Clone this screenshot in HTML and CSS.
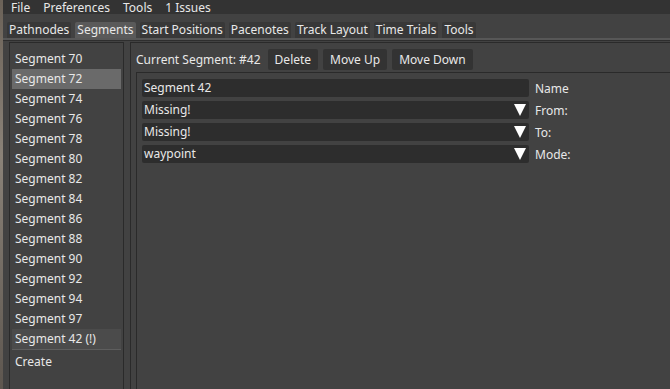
FILE: index.html
```html
<!DOCTYPE html>
<html lang="en">
<head>
    <meta charset="UTF-8">
    <title>Segments</title>
    <link rel="stylesheet" href="styles.css">
</head>
<body>
    <div class="edge"></div>
    <div class="window">
        <div class="menubar">
            <span class="menu-item">File</span>
            <span class="menu-item">Preferences</span>
            <span class="menu-item">Tools</span>
            <span class="menu-item">1 Issues</span>
        </div>

        <div class="tabbar">
            <span class="tab">Pathnodes</span>
            <span class="tab active">Segments</span>
            <span class="tab">Start Positions</span>
            <span class="tab">Pacenotes</span>
            <span class="tab">Track Layout</span>
            <span class="tab">Time Trials</span>
            <span class="tab">Tools</span>
        </div>

        <div class="content">
            <div class="segment-list">
                <div class="list-item">Segment 70</div>
                <div class="list-item selected">Segment 72</div>
                <div class="list-item">Segment 74</div>
                <div class="list-item">Segment 76</div>
                <div class="list-item">Segment 78</div>
                <div class="list-item">Segment 80</div>
                <div class="list-item">Segment 82</div>
                <div class="list-item">Segment 84</div>
                <div class="list-item">Segment 86</div>
                <div class="list-item">Segment 88</div>
                <div class="list-item">Segment 90</div>
                <div class="list-item">Segment 92</div>
                <div class="list-item">Segment 94</div>
                <div class="list-item">Segment 97</div>
                <div class="list-item current">Segment 42 (!)</div>
                <div class="list-item create">Create</div>
            </div>

            <div class="editor">
                <div class="toolbar">
                    <span class="current-label">Current Segment: #42</span>
                    <button class="btn">Delete</button>
                    <button class="btn">Move Up</button>
                    <button class="btn">Move Down</button>
                </div>

                <div class="fields">
                    <div class="field">
                        <div class="input">Segment 42</div>
                        <span class="field-label">Name</span>
                    </div>
                    <div class="field">
                        <div class="input">Missing!<span class="arrow"></span></div>
                        <span class="field-label">From:</span>
                    </div>
                    <div class="field">
                        <div class="input">Missing!<span class="arrow"></span></div>
                        <span class="field-label">To:</span>
                    </div>
                    <div class="field">
                        <div class="input">waypoint<span class="arrow"></span></div>
                        <span class="field-label">Mode:</span>
                    </div>
                </div>
            </div>
        </div>
    </div>
</body>
</html>
```

FILE: styles.css
```css
body {
    margin: 0;
    height: 389px;
    overflow: hidden;
    display: flex;
    background: #424242;
    font-family: 'Noto Sans', sans-serif;
    font-size: 12px;
    color: #e8e8e8;
}
.edge {
    width: 3px;
    background: linear-gradient(#6b6258, #8a8278 40%, #5d564f);
}
.window {
    flex: 1;
    display: flex;
    flex-direction: column;
    min-width: 0;
}
.menubar {
    height: 14px;
    background: #333333;
    display: flex;
    gap: 11px;
    padding-left: 7px;
    line-height: 15px;
}
.menu-item {
    padding: 0 1px;
}
.tabbar {
    display: flex;
    gap: 4px;
    padding: 8px 0 0 4px;
    border-bottom: 2px solid #575757;
}
.tab {
    height: 16px;
    line-height: 16px;
    padding: 0 2px;
    background: #383838;
    border-radius: 2px 2px 0 0;
}
.tab.active {
    background: #5a5a5a;
}
.content {
    flex: 1;
    display: flex;
    gap: 6px;
    padding: 1px 0 0 6px;
    border-top: 1px solid #2e2e2e;
}
.segment-list {
    width: 109px;
    border: 1px solid #2a2a2a;
    border-bottom: none;
    padding: 6px 2px 0 2px;
}
.list-item {
    height: 20px;
    line-height: 20px;
    padding-left: 3px;
}
.list-item.selected {
    background: #6a6a6a;
}
.list-item.current {
    background: #4b4b4b;
    border-bottom: 1px solid #5e5e5e;
}
.list-item.create {
    margin-top: 2px;
}
.editor {
    flex: 1;
    display: flex;
    flex-direction: column;
    border: 1px solid #2a2a2a;
    border-right: none;
    border-bottom: none;
    padding: 6px 0 0 5px;
}
.toolbar {
    display: flex;
    align-items: center;
    height: 21px;
}
.current-label {
    margin-right: 7px;
}
.btn {
    font: inherit;
    color: inherit;
    background: #333333;
    border: none;
    border-radius: 2px;
    height: 21px;
    padding: 0 7px;
    margin-right: 5px;
}
.fields {
    flex: 1;
    margin-top: 2px;
    border: 1px solid #2a2a2a;
    border-right: none;
    border-bottom: none;
    padding: 6px 0 0 5px;
    display: flex;
    flex-direction: column;
    gap: 4px;
}
.field {
    display: flex;
    align-items: center;
    height: 18px;
}
.input {
    width: 385px;
    height: 18px;
    line-height: 18px;
    padding-left: 2px;
    background: #2d2d2d;
    border-radius: 2px;
    position: relative;
}
.arrow {
    position: absolute;
    right: 3px;
    top: 3px;
    width: 0;
    height: 0;
    border-left: 6px solid transparent;
    border-right: 6px solid transparent;
    border-top: 12px solid #ffffff;
}
.field-label {
    margin-left: 6px;
}
```
